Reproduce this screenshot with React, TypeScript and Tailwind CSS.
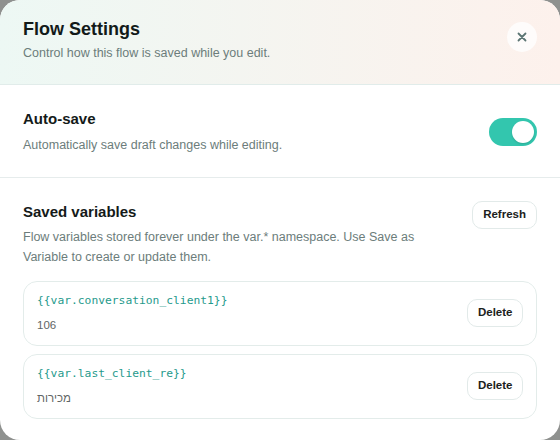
import { useState } from "react";

type SavedVar = { key: string; value: string };

const VARS: SavedVar[] = [
  { key: "conversation_client1", value: "106" },
  { key: "last_client_re", value: "מכירות" },
];

function Toggle({ on, onChange }: { on: boolean; onChange: (v: boolean) => void }) {
  return (
    <button
      type="button"
      onClick={() => onChange(!on)}
      className={`flex h-[28px] w-[48px] shrink-0 items-center rounded-full p-[3px] ${
        on ? "justify-end bg-[#33c6ae]" : "justify-start bg-[#d5dedd]"
      }`}
    >
      <span className="h-[22px] w-[22px] rounded-full bg-white shadow-[0_1px_2px_rgba(0,0,0,0.15)]" />
    </button>
  );
}

function SmallButton({ children, className = "" }: { children: string; className?: string }) {
  return (
    <button
      type="button"
      className={`h-[28px] shrink-0 rounded-[10px] border border-[#e2eae9] bg-white text-[11.5px] font-bold text-[#1b2120] ${className}`}
    >
      {children}
    </button>
  );
}

export default function App() {
  const [autoSave, setAutoSave] = useState(true);

  return (
    <div className="h-[440px] w-[560px] bg-[#8f918f] font-['Liberation_Sans',Arial,sans-serif]">
      <div className="flex h-full w-full flex-col overflow-hidden rounded-[20px] bg-white">
        {/* header */}
        <div className="flex items-start justify-between border-b border-[#e1ecea] bg-gradient-to-r from-[#edf8f4] to-[#fdf1ec] px-[23px] pb-[22px] pt-[17px]">
          <div>
            <h1 className="text-[18px] font-bold leading-6 text-[#121a19]">Flow Settings</h1>
            <p className="mt-[3px] text-[12.5px] leading-[18px] text-[#6c7d7b]">
              Control how this flow is saved while you edit.
            </p>
          </div>
          <button
            type="button"
            className="mt-[5px] flex h-[30px] w-[30px] items-center justify-center rounded-full bg-white/80"
          >
            <svg width="10" height="10" viewBox="0 0 10 10" fill="none">
              <path d="M1.5 1.5l7 7M8.5 1.5l-7 7" stroke="#5c7573" strokeWidth="1.8" strokeLinecap="round" />
            </svg>
          </button>
        </div>

        {/* auto-save */}
        <div className="flex items-center justify-between border-b border-[#e6ecec] px-[23px] pb-[23px] pt-[24px]">
          <div>
            <h2 className="text-[15px] font-bold leading-5 text-[#141a19]">Auto-save</h2>
            <p className="mt-[7px] text-[12.5px] leading-[18px] text-[#6c7d7b]">
              Automatically save draft changes while editing.
            </p>
          </div>
          <Toggle on={autoSave} onChange={setAutoSave} />
        </div>

        {/* saved variables */}
        <div className="flex flex-col px-[23px] pt-[24px]">
          <div className="flex items-start justify-between">
            <div>
              <h2 className="text-[15px] font-bold leading-5 text-[#141a19]">Saved variables</h2>
              <p className="mt-[5px] max-w-[410px] text-[12.5px] leading-5 text-[#6c7d7b]">
                Flow variables stored forever under the var.* namespace. Use Save as Variable to create or update them.
              </p>
            </div>
            <SmallButton className="-mt-px px-[10px]">Refresh</SmallButton>
          </div>

          <div className="mt-[14px] flex flex-col gap-[8px]">
            {VARS.map((v) => (
              <div
                key={v.key}
                className="flex items-center justify-between rounded-[14px] border border-[#e3ecea] pb-[12px] pl-[13px] pr-[13px] pt-[10px]"
              >
                <div className="flex flex-col gap-[7px]">
                  <span className="font-['DejaVu_Sans_Mono',monospace] text-[11.3px] leading-[18px] text-[#1f9a8c]">
                    {`{{var.${v.key}}}`}
                  </span>
                  <span className="text-[11.5px] leading-4 text-[#5f6665]">{v.value}</span>
                </div>
                <SmallButton className="px-[9.5px]">Delete</SmallButton>
              </div>
            ))}
          </div>
        </div>
      </div>
    </div>
  );
}
